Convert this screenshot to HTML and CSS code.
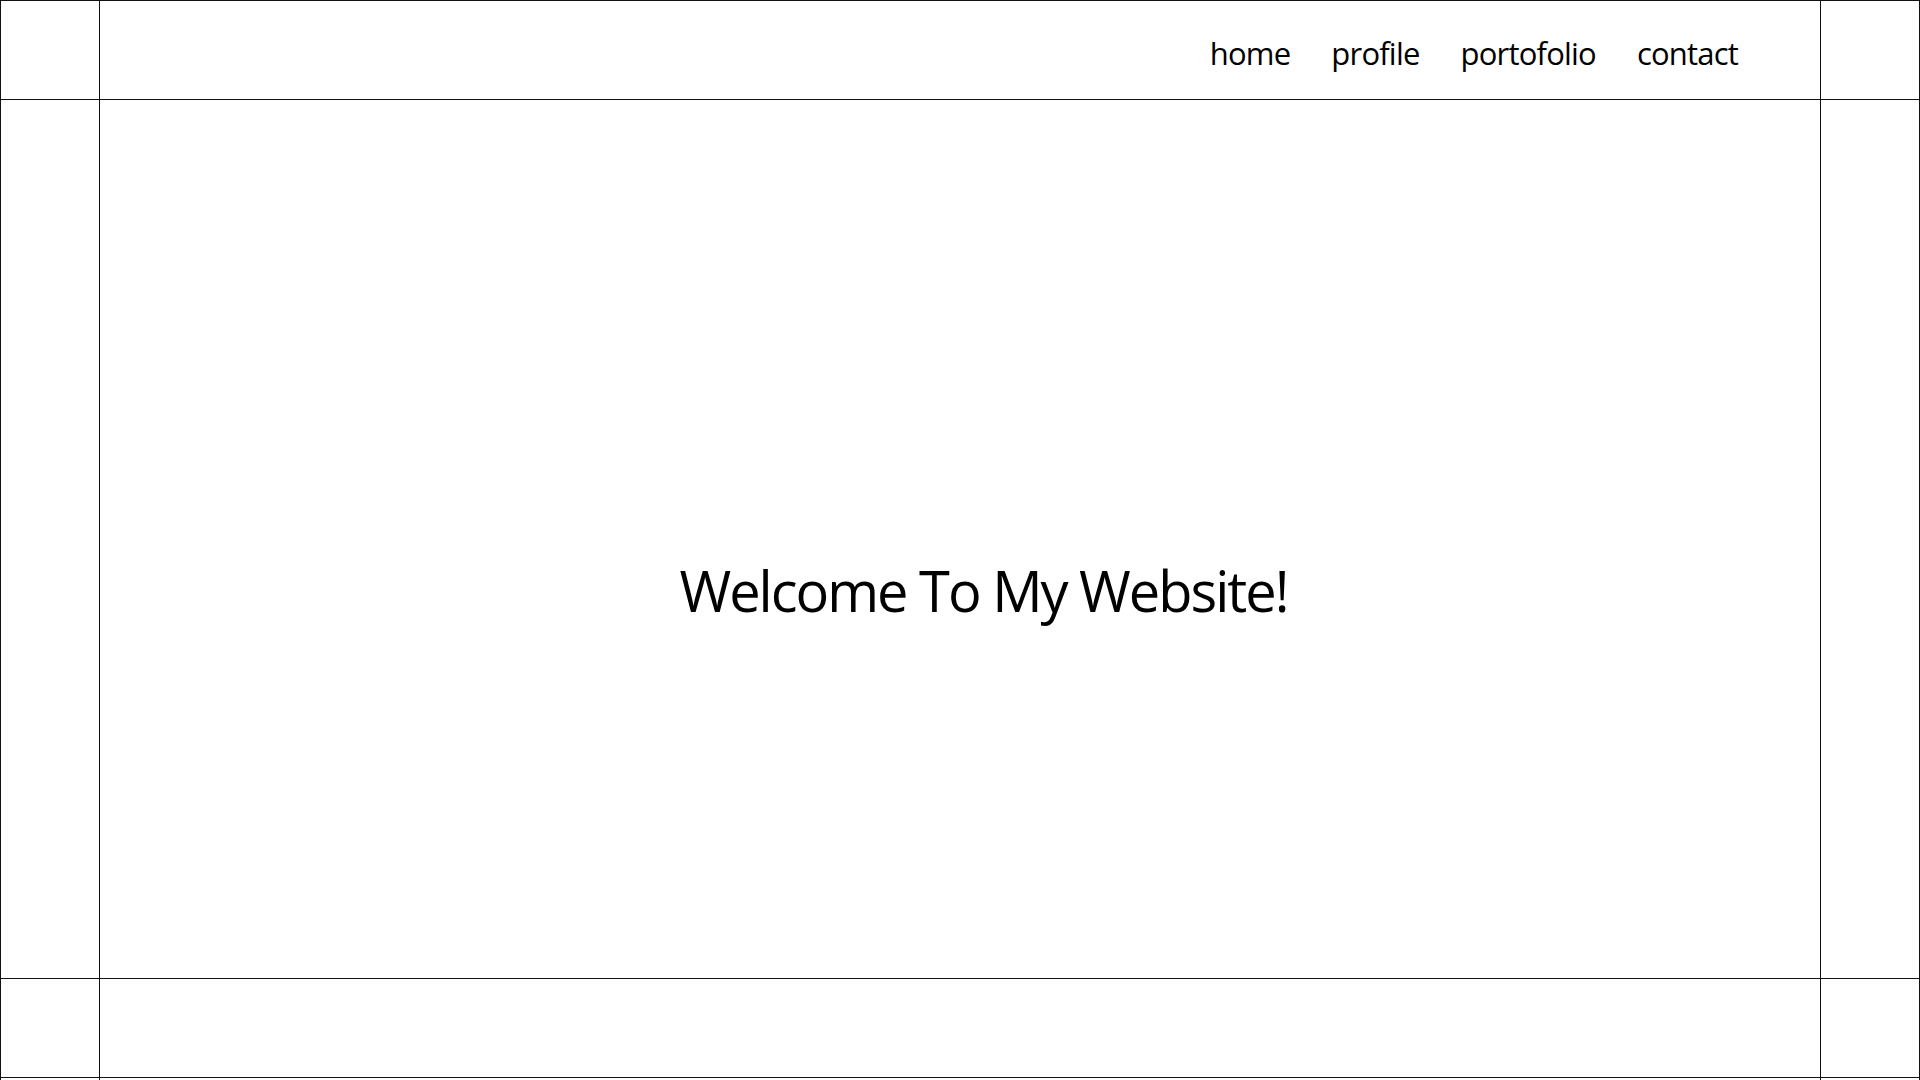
FILE: index.html
```html
<!DOCTYPE html>
<html lang="en">
<head>
<meta charset="utf-8">
<title>Welcome</title>
<link rel="stylesheet" href="styles.css">
</head>
<body>
<div class="frame">
  <div class="cell"></div>
  <header class="cell header">
    <nav class="nav">
      <a class="nav-link" href="#">home</a>
      <a class="nav-link" href="#">profile</a>
      <a class="nav-link" href="#">portofolio</a>
      <a class="nav-link" href="#">contact</a>
    </nav>
  </header>
  <div class="cell"></div>

  <div class="cell"></div>
  <main class="cell main">
    <h1 class="title">Welcome To My Website!</h1>
  </main>
  <div class="cell"></div>

  <div class="cell"></div>
  <footer class="cell"></footer>
  <div class="cell"></div>

  <div class="cell"></div>
  <div class="cell"></div>
  <div class="cell"></div>
</div>
</body>
</html>
```
FILE: styles.css
```css
html, body {
  margin: 0;
  padding: 0;
  background: #fff;
}
body {
  font-family: "Open Sans", "Noto Sans", sans-serif;
  color: #000;
  overflow: hidden;
}
.frame {
  width: 1920px;
  height: 1080px;
  box-sizing: border-box;
  display: grid;
  grid-template-columns: 98px 1720px 98px;
  grid-template-rows: 98px 878px 98px 2px;
  gap: 1px;
  background: #111;
  border-left: 1px solid #111;
  border-top: 1px solid #111;
  border-right: 1px solid #111;
}
.cell {
  background: #fff;
  min-width: 0;
  min-height: 0;
}
.header {
  display: flex;
  justify-content: flex-end;
}
.nav {
  display: flex;
  gap: 41px;
  padding-right: 82px;
  padding-top: 32px;
}
.nav-link {
  font-size: 31px;
  line-height: 40px;
  color: #000;
  text-decoration: none;
  letter-spacing: -0.8px;
}
.main {
  display: flex;
  justify-content: center;
  padding-left: 47px;
  padding-top: 460px;
  box-sizing: border-box;
}
.title {
  margin: 0;
  font-size: 56px;
  font-weight: 400;
  line-height: 60px;
  letter-spacing: -2px;
}
```
